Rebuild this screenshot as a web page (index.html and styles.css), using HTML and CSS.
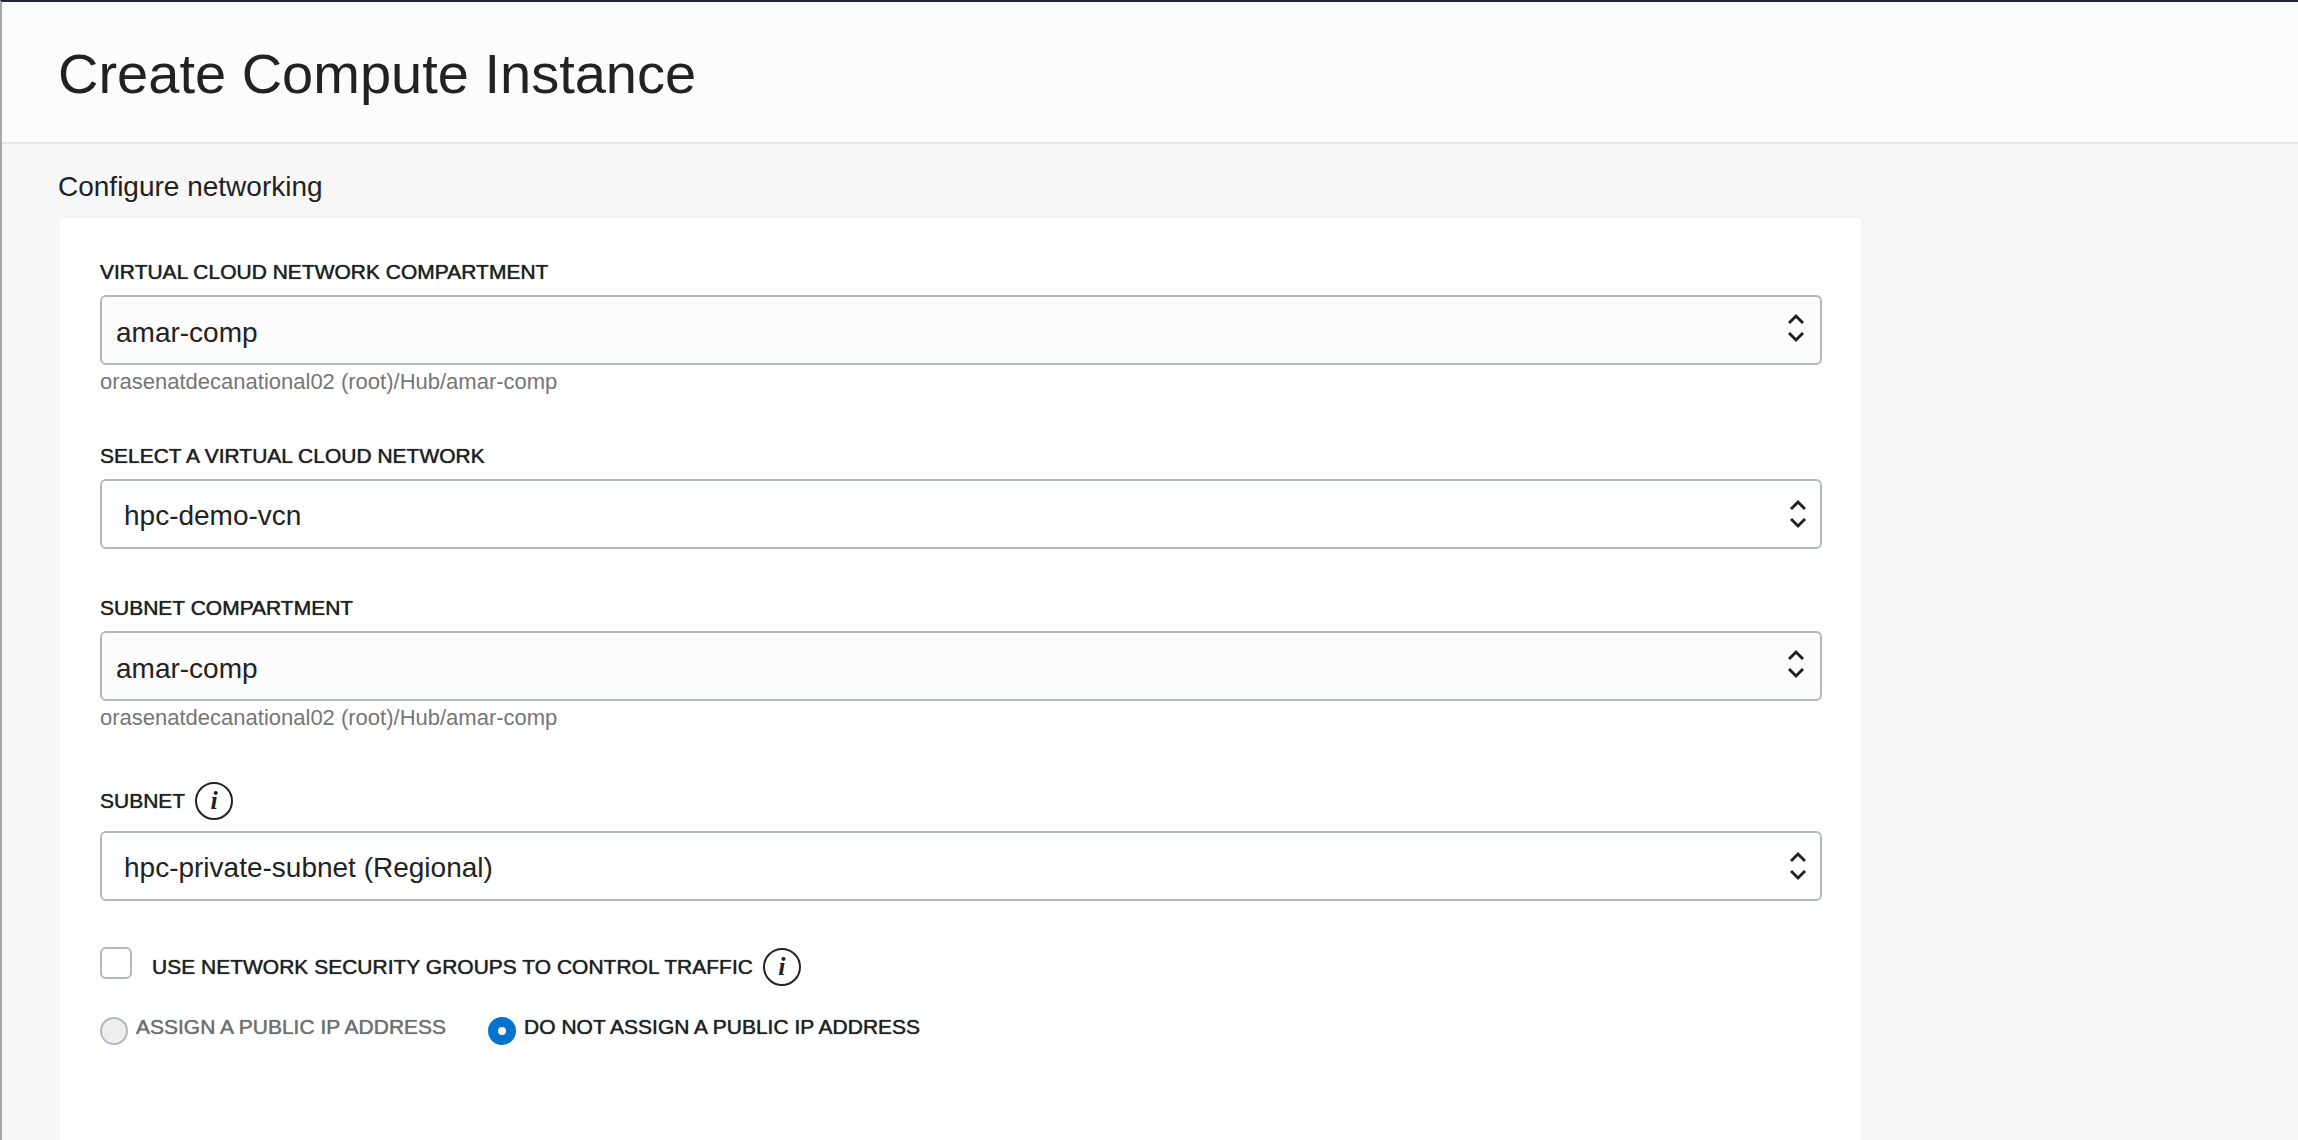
FILE: index.html
```html
<!DOCTYPE html>
<html lang="en">
<head>
  <meta charset="utf-8">
  <meta name="viewport" content="width=device-width, initial-scale=1">
  <title>Create Compute Instance</title>
  <link rel="stylesheet" href="styles.css">
</head>
<body>
  <header class="page-header">
    <h1 class="page-title">Create Compute Instance</h1>
  </header>

  <main class="page-main">
    <h2 class="section-title">Configure networking</h2>

    <form class="card">
      <div class="field">
        <label class="label" for="vcn-compartment">VIRTUAL CLOUD NETWORK COMPARTMENT</label>
        <div class="picker picker--compartment">
          <select class="picker__select" id="vcn-compartment" aria-describedby="vcn-path">
            <option>amar-comp</option>
          </select>
          <svg class="picker__arrows" viewBox="0 0 16 30" aria-hidden="true"><path d="M1 10 8 3l7 7M1 20l7 7 7-7"/></svg>
        </div>
        <p class="hint" id="vcn-path">orasenatdecanational02 (root)/Hub/amar-comp</p>
      </div>

      <div class="field">
        <label class="label" for="vcn">SELECT A VIRTUAL CLOUD NETWORK</label>
        <div class="picker">
          <select class="picker__select" id="vcn">
            <option>hpc-demo-vcn</option>
          </select>
          <svg class="picker__arrows" viewBox="0 0 16 30" aria-hidden="true"><path d="M1 10 8 3l7 7M1 20l7 7 7-7"/></svg>
        </div>
      </div>

      <div class="field">
        <label class="label" for="subnet-compartment">SUBNET COMPARTMENT</label>
        <div class="picker picker--compartment">
          <select class="picker__select" id="subnet-compartment" aria-describedby="subnet-path">
            <option>amar-comp</option>
          </select>
          <svg class="picker__arrows" viewBox="0 0 16 30" aria-hidden="true"><path d="M1 10 8 3l7 7M1 20l7 7 7-7"/></svg>
        </div>
        <p class="hint" id="subnet-path">orasenatdecanational02 (root)/Hub/amar-comp</p>
      </div>

      <div class="field">
        <div class="label-row">
          <label class="label" for="subnet">SUBNET</label>
          <button class="info" type="button" aria-label="About subnets">i</button>
        </div>
        <div class="picker">
          <select class="picker__select" id="subnet">
            <option>hpc-private-subnet (Regional)</option>
          </select>
          <svg class="picker__arrows" viewBox="0 0 16 30" aria-hidden="true"><path d="M1 10 8 3l7 7M1 20l7 7 7-7"/></svg>
        </div>
      </div>

      <div class="options">
        <div class="label-row">
          <input class="checkbox" type="checkbox" id="nsg">
          <label class="label" for="nsg">USE NETWORK SECURITY GROUPS TO CONTROL TRAFFIC</label>
          <button class="info" type="button" aria-label="About network security groups">i</button>
        </div>
        <div class="radios">
          <div class="choice">
            <input class="radio" type="radio" name="public-ip" id="ip-yes" disabled>
            <label class="label label--disabled" for="ip-yes">ASSIGN A PUBLIC IP ADDRESS</label>
          </div>
          <div class="choice">
            <input class="radio" type="radio" name="public-ip" id="ip-no" checked>
            <label class="label" for="ip-no">DO NOT ASSIGN A PUBLIC IP ADDRESS</label>
          </div>
        </div>
      </div>
    </form>
  </main>
</body>
</html>
```
FILE: styles.css
```css
*,
*::before,
*::after {
  box-sizing: border-box;
}

body {
  display: flex;
  flex-direction: column;
  min-height: 100vh;
  margin: 0;
  border-top: 2px solid #1c2636;
  border-left: 2px solid #a9a9a9;
  background: #f7f7f7;
  color: #222;
  font-family: "Liberation Sans", Arial, sans-serif;
}

h1,
h2,
p {
  margin: 0;
  font-weight: 400;
}

.page-header {
  padding: 40px 56px 36px;
  border-bottom: 2px solid #e5e5e5;
  background: #fcfcfc;
}

.page-title {
  font-size: 56px;
  line-height: 64px;
}

.page-main {
  display: flex;
  flex: 1;
  flex-direction: column;
  padding: 26px 19% 0 58px;
}

.section-title {
  margin-left: -2px;
  font-size: 28px;
  line-height: 34px;
}

.card {
  flex: 1;
  margin-top: 14px;
  padding: 43px 40px 64px;
  border-radius: 4px 4px 0 0;
  background: #fff;
  box-shadow: 0 0 2px rgba(0, 0, 0, 0.06);
}

.field {
  display: flex;
  flex-direction: column;
  align-items: stretch;
}

.field + .field {
  margin-top: 48px;
}

.label {
  font-size: 21px;
  line-height: 22px;
  text-shadow: 0 0 1px currentColor;
}

.field > .label {
  margin-bottom: 2px;
}

.label--disabled {
  color: #707070;
}

.label-row {
  display: flex;
  align-items: center;
  gap: 10px;
  height: 40px;
}

.picker {
  display: grid;
  align-items: center;
  margin-top: 10px;
}

.picker__select,
.picker__arrows {
  grid-area: 1 / 1;
}

.picker__select {
  width: 100%;
  height: 70px;
  margin: 0;
  padding: 2px 48px 0 22px;
  border: 2px solid #b2b8c3;
  border-radius: 6px;
  appearance: none;
  background: #fff;
  color: inherit;
  font: inherit;
  font-size: 28px;
}

.picker__arrows {
  justify-self: end;
  width: 16px;
  height: 30px;
  margin-right: 16px;
  fill: none;
  stroke: #222;
  stroke-width: 3;
  pointer-events: none;
}

.picker--compartment .picker__select {
  padding: 4px 48px 0 14px;
  background: #fcfcfc;
}

.picker--compartment .picker__arrows {
  margin: 0 18px 4px 0;
}

.hint {
  margin-top: 2px;
  color: #767676;
  font-size: 22px;
  line-height: 30px;
}

.info {
  width: 38px;
  height: 38px;
  padding: 0;
  border: 2px solid #222;
  border-radius: 50%;
  background: none;
  color: inherit;
  font: italic bold 26px/32px "Liberation Serif", "Times New Roman", serif;
}

.options {
  margin-top: 46px;
}

.checkbox,
.radio {
  flex: none;
  margin: 0;
  border: 2px solid #b2b8c3;
  appearance: none;
  background: #fff;
}

.checkbox {
  align-self: flex-start;
  width: 32px;
  height: 32px;
  margin-right: 10px;
  border-radius: 6px;
}

.checkbox:checked {
  border-color: #0572ce;
  background: #0572ce;
}

.radios {
  display: flex;
  flex-wrap: wrap;
  gap: 42px;
  margin-top: 29px;
}

.choice {
  display: flex;
  align-items: flex-start;
  gap: 8px;
}

.radio {
  width: 28px;
  height: 28px;
  margin-top: 1px;
  border-radius: 50%;
}

.radio:disabled {
  background: #eee;
}

.radio:checked {
  border: 10px solid #0572ce;
}
```
